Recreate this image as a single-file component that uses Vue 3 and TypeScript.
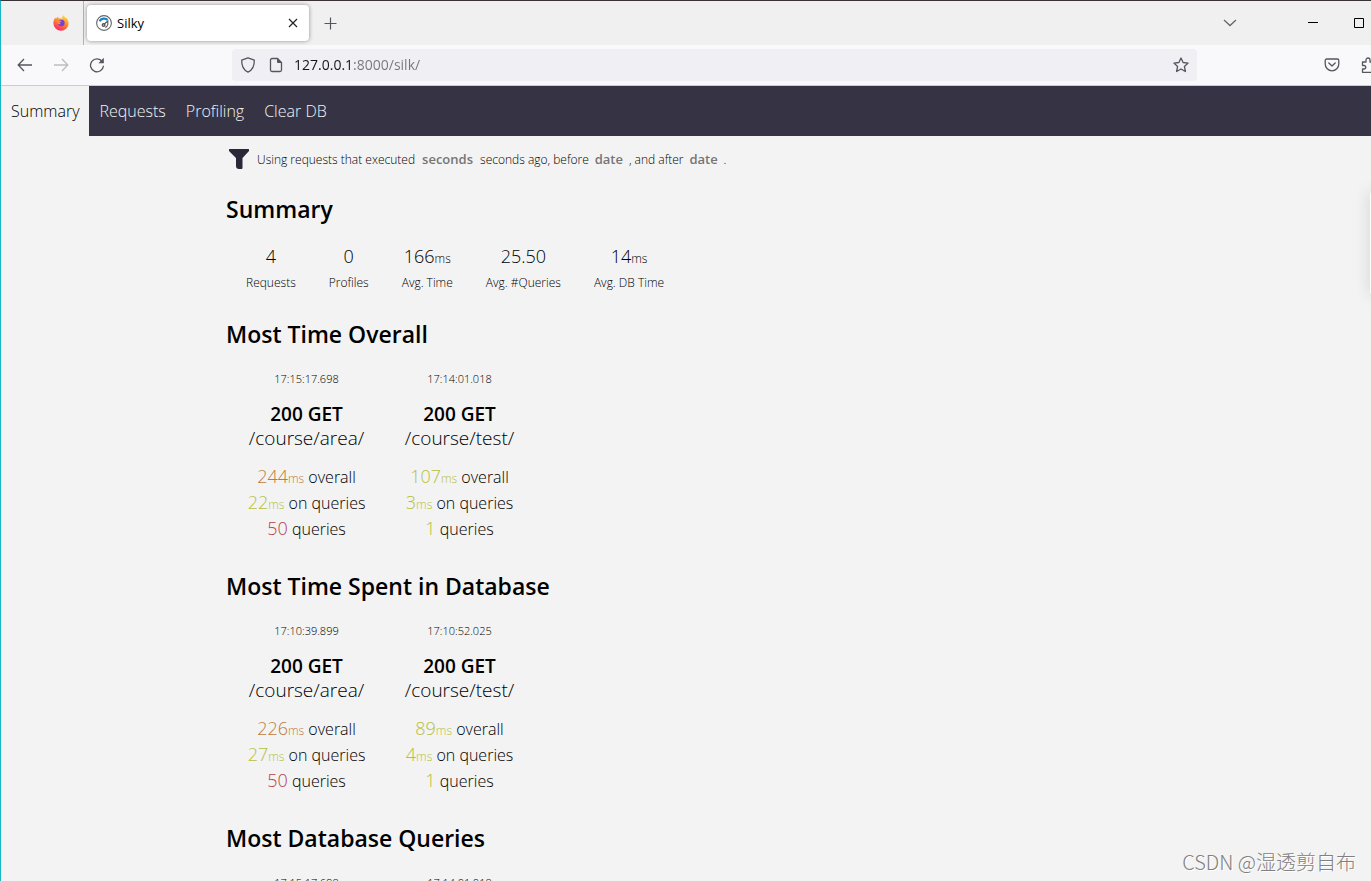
<script setup lang="ts">
import { ref } from 'vue'

interface Stat {
  value: string
  unit?: string
  label: string
}

interface Metric {
  value: string
  unit?: string
  label: string
  level: 'good' | 'fair' | 'bad'
}

interface RequestCard {
  time: string
  status?: string
  path?: string
  metrics?: Metric[]
}

interface Section {
  title: string
  cards: RequestCard[]
}

const address = ref('127.0.0.1:8000/silk/')
const seconds = ref('')
const beforeDate = ref('')
const afterDate = ref('')

const links = ['Summary', 'Requests', 'Profiling', 'Clear DB']

const stats: Stat[] = [
  { value: '4', label: 'Requests' },
  { value: '0', label: 'Profiles' },
  { value: '166', unit: 'ms', label: 'Avg. Time' },
  { value: '25.50', label: 'Avg. #Queries' },
  { value: '14', unit: 'ms', label: 'Avg. DB Time' },
]

function area(time: string, overall: string, db: string): RequestCard {
  return {
    time,
    status: '200 GET',
    path: '/course/area/',
    metrics: [
      { value: overall, unit: 'ms', label: 'overall', level: 'fair' },
      { value: db, unit: 'ms', label: 'on queries', level: 'good' },
      { value: '50', label: 'queries', level: 'bad' },
    ],
  }
}

function test(time: string, overall: string, db: string): RequestCard {
  return {
    time,
    status: '200 GET',
    path: '/course/test/',
    metrics: [
      { value: overall, unit: 'ms', label: 'overall', level: 'good' },
      { value: db, unit: 'ms', label: 'on queries', level: 'good' },
      { value: '1', label: 'queries', level: 'good' },
    ],
  }
}

const sections: Section[] = [
  {
    title: 'Most Time Overall',
    cards: [area('17:15:17.698', '244', '22'), test('17:14:01.018', '107', '3')],
  },
  {
    title: 'Most Time Spent in Database',
    cards: [area('17:10:39.899', '226', '27'), test('17:10:52.025', '89', '4')],
  },
  {
    title: 'Most Database Queries',
    cards: [{ time: '17:15:17.698' }, { time: '17:14:01.018' }],
  },
]
</script>

<template>
  <div class="window">
    <header class="tabs">
      <div class="brand">
        <svg width="16" height="16" viewBox="0 0 16 16" aria-hidden="true">
          <defs>
            <linearGradient id="flame" x1="0.8" y1="0" x2="0.3" y2="1">
              <stop offset="0" stop-color="#ffe14a" />
              <stop offset="0.45" stop-color="#ff8a2a" />
              <stop offset="1" stop-color="#f5246a" />
            </linearGradient>
          </defs>
          <path d="M10.500.3c1 1.200 1.500 2 1.700 2.800.7-.2.9-.7.900-.7 1.600 1.500 2.500 3.600 2.500 5.800a7.600 7.600 0 0 1-15.200 0c0-2.200.7-4.400 2-5.800l.5 1.500C3.600 3 4.300 2 5 1.500l.5 2c1.300-.4 2.800-.3 3.900.4C9 2.500 9.500 1.200 10.500.3z" fill="url(#flame)" />
          <circle cx="8.300" cy="8" r="3.300" fill="#7a3fd0" />
          <path d="M3.500 5.500c1.200-.8 2.600-.5 3.600.2l1.500.3c-.2 1-1.500 1-1.800 1.800 0 .5.400.8 1 .900-.8.900-2.600.700-3.400-.1-.6-1-.9-2.100-.9-3.100z" fill="#ff8a2a" />
        </svg>
      </div>
      <div class="tab">
        <svg width="16" height="16" viewBox="0 0 16 16" fill="none" aria-hidden="true">
          <circle cx="8" cy="8" r="7.400" fill="#fff" stroke="#666" stroke-width="1.100" />
          <path d="M3.600 6.300C5 3.300 9.200 2.700 11.600 4.900" stroke="#1583c8" stroke-width="2.200" />
          <circle cx="7.600" cy="10" r="1.300" stroke="#555" stroke-width="1.400" />
          <path d="M8.300 9l3.500-3v3.500c-.3 1.500-1.200 2.400-2.600 3" stroke="#555" stroke-width="1.100" />
        </svg>
        <span class="tab-title">Silky</span>
        <button class="icon" type="button" aria-label="Close tab">
          <svg width="10" height="10" viewBox="0 0 10 10"><path d="M1 1l8 8M9 1L1 9" stroke="#222" stroke-width="1.200" /></svg>
        </button>
      </div>
      <button class="icon new-tab" type="button" aria-label="New tab">
        <svg width="13" height="13" viewBox="0 0 13 13"><path d="M6.500 0.500v12M.5 6.500h12" stroke="#55555f" stroke-width="1.200" /></svg>
      </button>
      <div class="window-buttons">
        <button class="icon" type="button" aria-label="List all tabs">
          <svg width="14" height="8" viewBox="0 0 14 8" fill="none"><path d="M1 1l6 5.500L13 1" stroke="#66666e" stroke-width="1.300" /></svg>
        </button>
        <button class="icon minimise" type="button" aria-label="Minimise">
          <svg width="10" height="10" viewBox="0 0 10 10"><path d="M0 4.500h10" stroke="#000" /></svg>
        </button>
        <button class="icon" type="button" aria-label="Maximise">
          <svg width="10" height="10" viewBox="0 0 10 10" fill="none"><path d="M.5.500h9v9h-9z" stroke="#000" /></svg>
        </button>
      </div>
    </header>

    <div class="toolbar">
      <div class="history">
        <button class="icon" type="button" aria-label="Back">
          <svg width="16" height="14" viewBox="0 0 16 14" fill="none" stroke="#55555f" stroke-width="1.300"><path d="M15 7H1.500M7 1L1.200 7 7 13" /></svg>
        </button>
        <button class="icon" type="button" aria-label="Forward">
          <svg width="16" height="14" viewBox="0 0 16 14" fill="none" stroke="#bcbcc2" stroke-width="1.300"><path d="M1 7h13.500M9 1l5.800 6L9 13" /></svg>
        </button>
        <button class="icon" type="button" aria-label="Reload">
          <svg width="16" height="16" viewBox="0 0 16 16" fill="none"><path d="M13.300 4.500A6.500 6.500 0 1 0 14.500 8.800" stroke="#55555f" stroke-width="1.300" /><path d="M14.800.8v5.400H9.400z" fill="#55555f" /></svg>
        </button>
      </div>
      <div class="address">
        <svg width="16" height="16" viewBox="0 0 16 16" fill="none" stroke="#55555f" stroke-width="1.300" stroke-linejoin="round" aria-hidden="true"><path d="M8 .8l6.300 2.300c.2 5.300-1.300 9.800-6.300 12.100C3 12.900 1.500 8.400 1.700 3.100z" /></svg>
        <svg width="16" height="16" viewBox="0 0 16 16" fill="none" aria-hidden="true"><path d="M9.500 1.500H4A1.500 1.500 0 0 0 2.500 3v10A1.500 1.500 0 0 0 4 14.500h8a1.500 1.500 0 0 0 1.500-1.500V5.500z" stroke="#55555f" stroke-width="1.300" /><path d="M9 1l5 5H10a1 1 0 0 1-1-1z" fill="#55555f" /></svg>
        <input v-model="address" class="url" type="text" aria-label="Address" spellcheck="false" />
        <button class="icon" type="button" aria-label="Bookmark this page">
          <svg width="16" height="16" viewBox="0 0 16 16" fill="none" stroke="#55555f" stroke-width="1.300" stroke-linejoin="round"><path d="M8 1l2.100 4.500 5 .6-3.700 3.400 1 5L8 12l-4.400 2.500 1-5L.9 6.100l5-.6z" /></svg>
        </button>
      </div>
      <div class="extras">
        <button class="icon" type="button" aria-label="Save to Pocket">
          <svg width="16" height="14" viewBox="0 0 16 14" fill="none" stroke="#55555f" stroke-width="1.300" stroke-linejoin="round" stroke-linecap="round"><path d="M2.700 1h10.600A1.500 1.500 0 0 1 14.800 2.500V6a6.800 6.800 0 0 1-13.600 0V2.500A1.500 1.500 0 0 1 2.700 1zM4.800 5L8 8l3.200-3" /></svg>
        </button>
        <button class="icon" type="button" aria-label="Extensions">
          <svg width="16" height="16" viewBox="0 0 16 16" fill="none" stroke="#55555f" stroke-width="1.300" stroke-linejoin="round"><path d="M2.500 5H6V3a2 2 0 0 1 4 0v2h4.500v10.300h-12V12H4a1.700 1.700 0 0 0 0-3.500H2.500z" /></svg>
        </button>
      </div>
    </div>

    <nav class="menu">
      <a v-for="(link, i) in links" :key="link" href="#" :class="{ active: i === 0 }">{{ link }}</a>
    </nav>

    <main class="page">
      <form class="filter" @submit.prevent>
        <svg width="20" height="20" viewBox="0 0 20 20" fill="#2a2838" aria-hidden="true"><path d="M.5 0h19q.5 0 .5.500v1.500L13.500 9v10q0 1-1 1H10q-3 0-3-3V9L0 2V.5Q0 0 .5 0z" /></svg>
        <label for="seconds">Using requests that executed</label>
        <input id="seconds" v-model="seconds" class="seconds" type="text" placeholder="seconds" />
        <label for="before">seconds ago, before</label>
        <input id="before" v-model="beforeDate" type="text" placeholder="date" />
        <label for="after">, and after</label>
        <input id="after" v-model="afterDate" type="text" placeholder="date" />
        <span>.</span>
      </form>

      <section>
        <h2>Summary</h2>
        <div class="stats">
          <div v-for="stat in stats" :key="stat.label" class="stat">
            <div class="figure">{{ stat.value }}<small v-if="stat.unit">{{ stat.unit }}</small></div>
            <div class="caption">{{ stat.label }}</div>
          </div>
        </div>
      </section>

      <section v-for="section in sections" :key="section.title">
        <h2>{{ section.title }}</h2>
        <div class="cards">
          <a v-for="card in section.cards" :key="card.time" class="card" href="#">
            <span class="time">{{ card.time }}</span>
            <strong v-if="card.status">{{ card.status }}</strong>
            <span v-if="card.path" class="path">{{ card.path }}</span>
            <span v-if="card.metrics" class="metrics">
              <span v-for="metric in card.metrics" :key="metric.label" class="metric">
                <span :class="['number', metric.level]">{{ metric.value }}<small v-if="metric.unit">{{ metric.unit }}</small></span>
                {{ metric.label }}
              </span>
            </span>
          </a>
        </div>
      </section>
    </main>

    <div class="side-panel"></div>
    <div class="watermark">CSDN @湿透剪自布</div>
  </div>
</template>

<style>
body {
  margin: 0;
}
</style>

<style scoped>
.window {
  position: relative;
  box-sizing: border-box;
  display: flex;
  flex-direction: column;
  height: 100vh;
  overflow: hidden;
  border-top: 1px solid #393338;
  border-left: 1px solid #16b8c6;
  background: #f3f3f3;
  color: #000;
  font-family: "Open Sans", "Noto Sans", sans-serif;
  font-weight: 300;
}

.icon {
  display: flex;
  align-items: center;
  justify-content: center;
  flex: none;
  padding: 0;
  border: 0;
  background: none;
}

.tabs {
  display: flex;
  align-items: center;
  flex: none;
  height: 44px;
  background: #f0f0f0;
}

.brand {
  box-sizing: border-box;
  display: flex;
  align-items: center;
  justify-content: flex-end;
  width: 83px;
  height: 100%;
  padding-right: 14px;
  border-right: 1px solid #b4b4b4;
}

.tab {
  box-sizing: border-box;
  display: flex;
  align-items: center;
  gap: 5px;
  width: 222px;
  height: 36px;
  margin-left: 3px;
  padding: 0 11px 0 9px;
  border-radius: 4px;
  background: #fff;
  box-shadow: 0 0 4px rgba(0, 0, 0, 0.4);
  font-size: 13px;
  font-weight: 400;
}

.tab-title {
  flex: 1;
}

.new-tab {
  margin-left: 15px;
}

.window-buttons {
  display: flex;
  align-items: center;
  margin-left: auto;
  padding-right: 7px;
  gap: 36px;
}

.minimise {
  margin-left: 35px;
}

.toolbar {
  display: flex;
  align-items: center;
  flex: none;
  height: 40px;
  border-bottom: 1px solid #cccccf;
  background: #f9f9fb;
}

.history {
  display: flex;
  flex: none;
  gap: 20px;
  width: 215px;
  padding-left: 16px;
}

.address {
  box-sizing: border-box;
  display: flex;
  align-items: center;
  flex: 1;
  gap: 12px;
  height: 32px;
  padding: 0 8px;
  border-radius: 4px;
  background: #f0f0f4;
}

.url {
  flex: 1;
  min-width: 0;
  margin-left: -2px;
  padding: 0;
  border: 0;
  outline: 0;
  background: linear-gradient(90deg, #15141a 57px, #75757c 57px);
  background-clip: text;
  -webkit-text-fill-color: transparent;
  font: 400 14px/20px "Open Sans", sans-serif;
}

.extras {
  display: flex;
  flex: none;
  gap: 20px;
  width: 47px;
  padding-left: 127px;
}

.menu {
  display: flex;
  flex: none;
  background: #353344;
}

.menu a {
  padding: 0 10px;
  color: #f3f3f3;
  font-size: 16px;
  line-height: 50px;
  text-decoration: none;
}

.menu .active {
  background: #f3f3f3;
  color: #000;
}

.page {
  flex: 1;
  min-height: 0;
  overflow: hidden;
  padding-left: 225px;
}

.filter {
  display: flex;
  align-items: center;
  height: 24px;
  padding: 11px 0 0 3px;
  font-size: 12px;
}

.filter svg {
  margin-right: 8px;
}

.filter input {
  width: 40px;
  padding: 0;
  border: 0;
  background: none;
  font: inherit;
  font-size: 13px;
  font-weight: 600;
  text-align: center;
}

.filter .seconds {
  width: 65px;
}

.filter input::placeholder {
  color: #757575;
}

h2 {
  margin: 0;
  font-size: 23px;
  font-weight: 600;
  line-height: 32px;
}

section {
  padding-top: 22px;
}

.stats {
  display: flex;
  gap: 33px;
  padding: 18px 0 0 20px;
  text-align: center;
}

.figure {
  font-size: 18px;
  line-height: 26px;
}

small {
  font-size: 12px;
  line-height: 1;
}

.caption {
  padding-top: 1px;
  font-size: 12px;
  line-height: 26px;
}

.cards {
  display: grid;
  grid-template-columns: repeat(auto-fill, 153px);
  padding: 19px 0 6px 4px;
}

.card {
  display: flex;
  flex-direction: column;
  align-items: center;
  color: inherit;
  text-decoration: none;
  white-space: nowrap;
}

.time {
  font-size: 11px;
  line-height: 20px;
}

.card strong {
  margin-top: 13px;
  font-size: 19px;
  font-weight: 600;
  line-height: 24px;
}

.path {
  font-size: 19px;
  line-height: 24px;
}

.metrics {
  display: flex;
  flex-direction: column;
  align-items: center;
  margin-top: 14px;
}

.metric {
  height: 26px;
  font-size: 16px;
  line-height: 26px;
}

.number {
  font-size: 18px;
  line-height: 1;
}

.good {
  color: #b4c03c;
}

.fair {
  color: #be7a3a;
}

.bad {
  color: #be3c48;
}

.side-panel {
  position: absolute;
  top: 190px;
  right: -9px;
  width: 10px;
  height: 104px;
  border-radius: 4px;
  background: #fff;
  box-shadow: 0 0 16px rgba(0, 0, 0, 0.15);
}

.watermark {
  position: absolute;
  right: 15px;
  bottom: 4px;
  color: #808080;
  font: 300 20px/30px "Noto Sans CJK SC", sans-serif;
  text-shadow: 1px 1px 0 #fff;
}
</style>
